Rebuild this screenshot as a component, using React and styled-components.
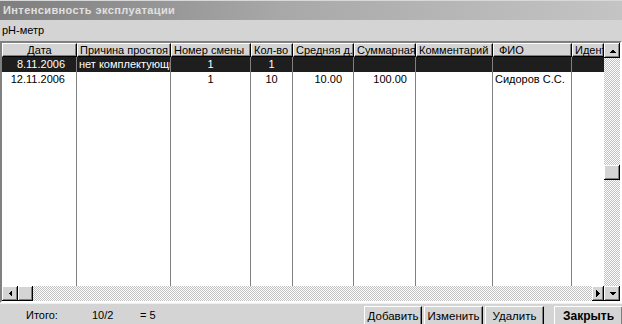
import styled, { createGlobalStyle } from "styled-components";

const GlobalStyle = createGlobalStyle`
  html, body {
    margin: 0;
    padding: 0;
    background: #d4d4d4;
    overflow: hidden;
  }
  body {
    font-family: "Liberation Sans", Arial, sans-serif;
    font-size: 11px;
    color: #000;
  }
`;

const columns = [
  { title: "Дата", width: 75, align: "right", pad: 11, head: "center" },
  { title: "Причина простоя", width: 94, align: "left", pad: 2 },
  { title: "Номер смены", width: 80, align: "center", pad: 0 },
  { title: "Кол-во", width: 42, align: "center", pad: 0 },
  { title: "Средняя д.", width: 61, align: "right", pad: 11 },
  { title: "Суммарная", width: 62, align: "right", pad: 8 },
  { title: "Комментарий", width: 77, align: "left", pad: 2 },
  { title: "ФИО", width: 79, align: "left", pad: 2, headPad: 5 },
  { title: "Идент", width: 32, align: "left", pad: 2, last: true },
];

const rows = [
  { selected: true, cells: ["8.11.2006", "нет комплектующих", "1", "1", "", "", "", "", ""] },
  { cells: ["12.11.2006", "", "1", "10", "10.00", "100.00", "", "Сидоров С.С.", ""] },
];

const gridCols = columns.map((c) => c.width + "px").join(" ");

export default function App() {
  return (
    <Window>
      <GlobalStyle />
      <TitleBar>Интенсивность эксплуатации</TitleBar>
      <SubTitle>pH-метр</SubTitle>
      <GridFrame>
        <TableArea>
          <HeaderRow>
            {columns.map((c) => (
              <HeaderCell key={c.title} $align={c.head || "left"} $pad={c.headPad || 2}>
                {c.title}
              </HeaderCell>
            ))}
          </HeaderRow>
          <Body>
            {rows.map((r, i) => (
              <Row key={i} $selected={r.selected}>
                {r.cells.map((v, j) => (
                  <Cell key={j} $align={columns[j].align} $pad={columns[j].pad} $last={columns[j].last}>
                    {v}
                  </Cell>
                ))}
              </Row>
            ))}
            <FillerRow>
              {columns.map((c) => (
                <Cell key={c.title} $last={c.last} />
              ))}
            </FillerRow>
          </Body>
        </TableArea>
        <VScroll>
          <ScrollButton>
            <Arrow dir="up" />
          </ScrollButton>
          <VTrack>
            <VThumb />
          </VTrack>
        </VScroll>
        <HScroll>
          <ScrollButton>
            <Arrow dir="left" />
          </ScrollButton>
          <HThumb />
          <HTrack />
          <ScrollButton $narrow>
            <Arrow dir="right" />
          </ScrollButton>
        </HScroll>
        <ScrollButton>
          <Arrow dir="down" />
        </ScrollButton>
      </GridFrame>
      <Footer>
        <Totals>
          <span>Итого:</span>
          <TotalValue>10/2</TotalValue>
          <span>= 5</span>
        </Totals>
        <Buttons>
          <Button $w={58}>Добавить</Button>
          <Button $w={59}>Изменить</Button>
          <Button $w={59}>Удалить</Button>
          <Button $w={69} $bold>Закрыть</Button>
        </Buttons>
      </Footer>
    </Window>
  );
}

function Arrow({ dir }) {
  const pts = {
    up: "0,4 7,4 3.5,0.5",
    down: "0,0 7,0 3.5,3.5",
    left: "4,0 4,7 0.5,3.5",
    right: "0,0 0,7 3.5,3.5",
  }[dir];
  const vertical = dir === "up" || dir === "down";
  return (
    <svg width={vertical ? 7 : 4} height={vertical ? 4 : 7} viewBox={vertical ? "0 0 7 4" : "0 0 4 7"}>
      <polygon points={pts} fill="#000" shapeRendering="crispEdges" />
    </svg>
  );
}

const Window = styled.div`
  width: 622px;
  height: 324px;
  display: flex;
  flex-direction: column;
  background: #d4d4d4;
  overflow: hidden;
`;

const TitleBar = styled.div`
  height: 19px;
  border-top: 1px solid #d8d8d8;
  background: linear-gradient(to right, #7e7e7e 0%, #a8a8a8 45%, #c4c4c4 100%);
  color: #e0e0e0;
  font-weight: bold;
  font-size: 11px;
  line-height: 19px;
  padding-left: 3px;
  letter-spacing: 0.4px;
`;

const SubTitle = styled.div`
  height: 21px;
  line-height: 20px;
  padding-left: 2px;
  font-size: 11px;
`;

const GridFrame = styled.div`
  height: 258px;
  flex: none;
  display: grid;
  grid-template-columns: 602px 16px;
  grid-template-rows: 243px 15px;
  border-style: solid;
  border-width: 2px;
  border-color: #808080 #ffffff #ffffff #808080;
  box-shadow: inset 1px 1px #000, inset -1px -1px #d4d4d4;
  background: #fff;
`;

const TableArea = styled.div`
  display: flex;
  flex-direction: column;
  overflow: hidden;
  background: #fff;
`;

const HeaderRow = styled.div`
  display: grid;
  grid-template-columns: ${gridCols};
  height: 14px;
  flex: none;
`;

const HeaderCell = styled.div`
  background: #d4d4d4;
  border-style: solid;
  border-width: 1px;
  border-color: #fff #000 #000 #fff;
  box-shadow: inset -1px -1px #808080;
  font-size: 11px;
  line-height: 12px;
  white-space: nowrap;
  overflow: hidden;
  text-align: ${(p) => p.$align};
  padding-left: ${(p) => (p.$align === "left" ? p.$pad : 0)}px;
`;

const Body = styled.div`
  flex: 1;
  display: flex;
  flex-direction: column;
`;

const Row = styled.div`
  display: grid;
  grid-template-columns: ${gridCols};
  height: 15px;
  background: ${(p) => (p.$selected ? "#1e1e1e" : "#fff")};
  color: ${(p) => (p.$selected ? "#fff" : "#000")};
`;

const FillerRow = styled(Row)`
  flex: 1;
  height: auto;
`;

const Cell = styled.div`
  border-right: ${(p) => (p.$last ? "none" : "1px solid #808080")};
  font-size: 11px;
  line-height: 15px;
  white-space: nowrap;
  overflow: hidden;
  text-align: ${(p) => p.$align || "left"};
  padding-left: ${(p) => (p.$align === "left" ? p.$pad : 0)}px;
  padding-right: ${(p) => (p.$align === "right" ? p.$pad : 0)}px;
`;

const checker = `
  background-color: #fff;
  background-image: repeating-conic-gradient(#c0c0c0 0 25%, #fff 0 50%);
  background-size: 2px 2px;
`;

const VScroll = styled.div`
  display: flex;
  flex-direction: column;
`;

const VTrack = styled.div`
  flex: 1;
  ${checker}
  padding-top: 107px;
`;

const ScrollButton = styled.div`
  width: ${(p) => (p.$narrow ? 12 : 16)}px;
  height: 15px;
  flex: none;
  display: flex;
  align-items: center;
  justify-content: center;
  background: #d4d4d4;
  box-shadow: inset -1px -1px #000, inset 1px 1px #fff, inset -2px -2px #808080;
  box-sizing: border-box;
`;

const VThumb = styled.div`
  width: 16px;
  height: 15px;
  background: #d4d4d4;
  box-shadow: inset -1px -1px #000, inset 1px 1px #fff, inset -2px -2px #808080;
`;

const HScroll = styled.div`
  display: flex;
`;

const HThumb = styled.div`
  width: 15px;
  height: 15px;
  flex: none;
  background: #d4d4d4;
  box-shadow: inset -1px -1px #000, inset 1px 1px #fff, inset -2px -2px #808080;
`;

const HTrack = styled.div`
  flex: 1;
  ${checker}
`;

const Footer = styled.div`
  flex: 1;
  display: flex;
  justify-content: space-between;
  align-items: flex-start;
  border-top: 1px solid #f0f0f0;
  overflow: hidden;
`;

const Totals = styled.div`
  display: flex;
  padding-left: 26px;
  padding-top: 5px;
  font-size: 11px;

  span:first-child {
    width: 66px;
  }
`;

const TotalValue = styled.span`
  width: 48px;
`;

const Buttons = styled.div`
  display: flex;
  gap: 2px;
  padding-top: 2px;
  margin-right: -1px;

  & > :last-child {
    margin-left: 8px;
  }
`;

const Button = styled.div`
  width: ${(p) => p.$w}px;
  height: 22px;
  box-sizing: border-box;
  background: #d4d4d4;
  border-style: solid;
  border-width: 1px;
  border-color: #fff #000 #000 #fff;
  box-shadow: inset -1px -1px #808080;
  font-size: ${(p) => (p.$bold ? 12 : 11.5)}px;
  font-weight: ${(p) => (p.$bold ? "bold" : "normal")};
  text-align: center;
  line-height: 16px;
  padding-top: 1px;
`;
